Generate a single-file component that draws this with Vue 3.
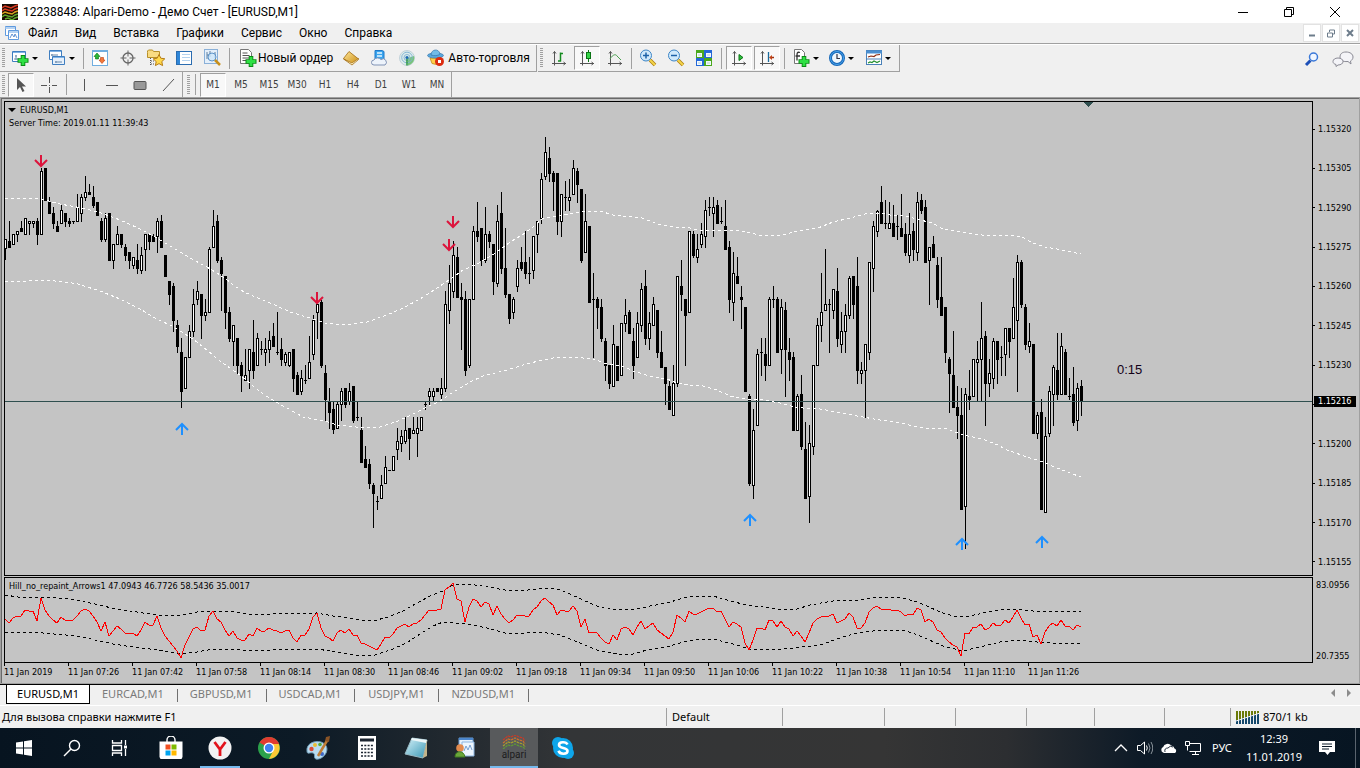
<script setup>
import { ref } from 'vue'

const menu = ['Файл', 'Вид', 'Вставка', 'Графики', 'Сервис', 'Окно', 'Справка']
const viewTools = [
  { icon: 'market', label: 'Обзор рынка' },
  { icon: 'target', label: 'Окно данных' },
  { icon: 'navigator', label: 'Навигатор', big: true },
  { icon: 'terminal', label: 'Терминал' },
  { icon: 'tester', label: 'Тестер стратегий', big: true }
]
const serviceTools = [
  { icon: 'book', label: 'MetaEditor' },
  { icon: 'cloud', label: 'Хостинг' },
  { icon: 'signal', label: 'Сигналы' }
]
const chartTypes = [
  { icon: 'bars', label: 'Бары' },
  { icon: 'candles', label: 'Свечи', on: true },
  { icon: 'curve', label: 'Линия' }
]
const zoomTools = [
  { icon: 'zoomin', label: 'Увеличить', big: true },
  { icon: 'zoomout', label: 'Уменьшить', big: true },
  { icon: 'tiles', label: 'Окна мозаикой' }
]
const scrollTools = [
  { icon: 'autoscroll', label: 'Автопрокрутка', on: true },
  { icon: 'shift', label: 'Сдвиг графика', on: true }
]
const addTools = [
  { icon: 'indicator', label: 'Индикаторы', big: true },
  { icon: 'clock', label: 'Периоды' },
  { icon: 'template', label: 'Шаблоны' }
]
const drawTools = [
  { icon: 'vline', label: 'Вертикальная линия' },
  { icon: 'hline', label: 'Горизонтальная линия' },
  { icon: 'rect', label: 'Прямоугольник' },
  { icon: 'trend', label: 'Трендовая линия' }
]
const frames = ['M1', 'M5', 'M15', 'M30', 'H1', 'H4', 'D1', 'W1', 'MN']
const frame = ref('M1')
const tabs = ['EURUSD,M1', 'EURCAD,M1', 'GBPUSD,M1', 'USDCAD,M1', 'USDJPY,M1', 'NZDUSD,M1']
const tab = ref('EURUSD,M1')
// The level behind the bid marker keeps its tick only
const prices = ['1.15320', '1.15305', '1.15290', '1.15275', '1.15260', '1.15245', '1.15230', '', '1.15200', '1.15185', '1.15170', '1.15155']
const times = ['2019', '07:26', '07:42', '07:58', '08:14', '08:30', '08:46', '09:02', '09:18', '09:34', '09:50', '10:06', '10:22', '10:38', '10:54', '11:10', '11:26']
const apps = [
  { icon: 'store', label: 'Магазин' },
  { icon: 'yandex', label: 'Яндекс', run: true },
  { icon: 'chrome', label: 'Chrome' },
  { icon: 'paint', label: 'Paint' },
  { icon: 'calc', label: 'Калькулятор' },
  { icon: 'note', label: 'Блокнот' },
  { icon: 'people', label: 'Контакты' },
  { icon: 'alpari', label: 'Alpari', run: true, on: true },
  { icon: 'skype', label: 'Skype' }
]

// Each bar: direction, high, body top, body bottom, low
const series = `u 239 239 249 260,d 221 241 248 248,u 234 234 245 245,u 231 231 235 242,d 221 228 232 232,u 218 218 235 235,u 221 221 224 235,u 221 221 224 228,d 218 221 235 245,u 168 171 235 235
d 168 168 201 201,d 197 202 214 214,d 207 213 224 229,d 221 226 232 232,u 205 210 224 224,d 213 213 222 227,d 218 221 224 227,d 221 221 222 224,u 194 207 222 222,u 194 197 214 222
u 176 192 198 201,d 184 192 195 195,d 186 197 206 208,d 202 202 216 216,d 218 221 240 242,u 213 218 240 242,d 213 213 261 261,u 244 244 261 269,u 226 234 245 245,d 234 234 245 248
d 244 247 256 261,d 252 252 261 269,u 257 257 266 269,d 244 260 269 274,u 247 255 271 274,u 234 234 250 271,d 234 234 242 250,d 234 236 242 242,u 218 221 237 253,d 215 221 248 248
d 255 255 277 277,d 281 281 295 305,d 283 286 321 332,d 320 325 347 353,d 338 352 392 408,u 357 357 389 389,u 325 331 358 358,u 289 304 332 337,u 281 291 300 305,d 294 294 316 339
u 299 312 316 321,u 247 249 313 313,u 210 226 248 248,d 215 221 261 263,d 257 260 274 311,d 276 276 313 329,d 307 312 339 342,u 325 325 342 366,d 338 338 366 374,d 362 365 376 392
u 349 375 381 381,u 349 349 371 389,d 320 352 371 379,u 333 338 366 366,d 341 349 350 355,u 338 349 353 366,u 331 340 350 363,d 323 336 347 347,d 312 352 353 355,d 338 349 360 366
u 352 354 363 366,u 352 352 366 367,d 349 349 379 392,d 372 375 395 395,u 370 378 392 395,d 365 380 381 384,u 336 362 379 379,u 315 320 355 360,u 304 304 313 339,d 300 302 366 368
d 365 373 400 421,d 388 401 413 429,d 401 409 430 434,u 401 404 429 429,u 388 391 405 421,d 388 388 405 408,u 383 391 402 405,d 386 386 421 423,d 401 417 418 421,d 417 430 463 463
d 446 459 468 468,d 459 464 484 489,d 483 485 494 528,d 496 501 502 510,u 475 485 499 499,u 456 467 484 484,d 470 470 471 471,u 456 456 471 471,u 428 441 450 460,u 430 436 444 452
u 417 430 442 444,d 428 428 439 460,u 417 430 434 434,u 417 428 434 457,u 417 417 431 431,d 401 404 405 410,u 388 391 397 405,u 388 391 397 401,d 388 388 392 392,u 378 388 395 402
u 291 304 389 392,u 265 283 311 324,u 241 255 292 298,d 247 257 298 298,d 283 297 300 350,d 291 299 371 376,u 299 299 366 368,u 226 231 300 300,d 202 231 237 242,d 228 228 261 266
u 207 234 261 263,d 231 234 242 248,d 244 244 282 295,u 205 221 284 287,d 192 213 269 274,d 228 268 295 298,d 294 294 319 324,u 297 299 313 319,u 260 268 287 292,d 247 262 269 271
d 231 262 274 279,d 257 273 274 284,u 236 236 271 279,u 221 221 235 253,u 173 179 219 224,u 137 152 177 180,d 147 158 174 182,d 171 173 182 211,d 173 173 222 235,u 194 194 222 237
d 181 197 198 211,u 179 197 201 211,u 160 168 195 195,d 168 171 185 203,d 189 189 261 263,u 194 221 253 253,d 226 226 303 303,d 273 299 300 358,d 297 299 308 329,d 299 307 339 342
d 338 341 366 381,d 365 365 384 389,u 325 344 387 387,d 346 346 381 381,u 323 323 376 376,u 299 315 324 332,d 310 312 334 334,d 328 341 366 379,u 312 323 358 358,u 283 289 326 332
d 270 286 339 345,u 312 323 339 350,u 297 304 326 326,d 310 310 353 358,d 331 352 368 368,d 367 367 384 405,d 380 386 410 410,u 365 383 416 416,u 276 276 384 387,d 260 286 295 311
d 299 299 316 366,u 231 231 313 313,d 231 234 256 258,u 234 249 258 263,u 223 234 245 248,u 200 210 237 248,d 197 207 208 216,u 197 207 214 237,d 200 205 224 224,d 207 221 222 224
d 200 226 250 250,d 241 247 300 313,u 252 273 303 321,d 257 276 284 284,d 286 297 300 329,d 307 307 392 392,d 394 396 484 486,u 409 430 486 499,u 349 354 426 426,d 338 352 353 376
d 338 354 366 381,u 297 299 366 366,d 286 299 300 308,d 297 299 353 353,u 299 307 350 374,d 302 310 350 397,d 338 352 360 381,d 352 357 431 431,u 394 396 431 431,d 375 394 447 450
d 422 449 499 499,u 425 443 497 523,u 365 365 447 455,u 318 325 366 366,u 273 312 326 342,u 249 304 311 311,d 299 304 305 353,u 289 289 311 319,d 268 291 339 347,u 312 331 345 353
u 304 315 332 353,u 276 278 316 319,d 276 276 305 319,d 257 286 371 384,u 362 370 374 384,u 344 344 371 418,u 262 262 353 360,u 221 226 269 292,u 210 211 232 237,d 186 202 224 224
d 200 223 224 229,u 202 223 229 229,d 205 223 237 237,d 215 226 227 240,d 194 228 237 237,d 223 234 253 256,u 213 234 256 263,d 223 231 250 261,u 192 202 253 261,d 194 200 211 214
d 200 207 263 263,u 247 247 261 305,d 236 244 258 258,d 257 265 300 308,d 257 297 316 316,d 307 307 353 363,d 357 359 374 413,d 331 375 408 408,d 386 407 416 439,d 388 415 510 510
u 388 394 507 549,d 370 396 400 410,u 359 359 397 397,u 341 359 363 402,u 302 338 360 402,d 331 336 384 426,u 359 373 384 397,u 338 341 379 389,d 341 341 360 384,d 346 357 358 376
u 328 328 355 376,d 328 328 342 358,u 278 307 339 339,u 255 262 321 392,d 260 262 305 308,d 304 307 345 350,u 323 341 347 353,d 344 344 434 434,u 412 415 434 439,d 399 412 510 510
u 417 436 513 513,u 386 391 434 437,u 365 367 395 426,d 333 370 395 400,u 333 346 395 395,d 349 352 395 395,d 378 396 397 400,d 367 394 423 426,u 383 388 421 431,d 380 386 402 416`
const bars = series.split(/[,\n]/).map((row, i) => {
  const [dir, hi, top, bottom, lo] = row.trim().split(' ')
  return { x: 5 + i * 4, up: dir === 'u', hi: +hi, top: +top, bottom: +bottom, lo: +lo }
})

const upperBand = '5,198 33,198 45,200 60,204 82,208 98,212 115,218 127,223 142,230 155,237 165,243 180,252 192,259 205,266 217,273 226,279 233,285 244,292 258,298 277,306 290,312 313,319 325,323 342,325 353,324 367,322 387,315 403,308 420,299 437,288 452,278 463,270 477,264 487,258 497,252 510,242 522,235 533,227 542,219 558,216 573,213 585,211 600,211 613,215 642,218 658,224 673,227 690,228 703,231 730,230 747,232 763,236 783,235 797,231 810,229 818,228 833,222 850,218 865,214 880,213 890,215 900,215 917,219 932,223 943,229 962,232 982,235 998,236 1007,235 1022,237 1033,243 1045,247 1057,249 1067,251 1081,254'
const lowerBand = '5,282 28,281 45,280 65,282 78,284 100,291 120,299 140,309 157,319 172,326 182,332 197,342 208,351 220,361 240,375 252,385 263,394 276,402 287,408 303,417 325,421 337,425 365,428 380,427 398,421 413,414 427,407 440,401 450,394 470,382 483,376 507,370 530,363 553,358 573,357 593,359 607,364 622,366 633,371 653,377 667,379 677,383 690,385 703,386 717,390 730,396 747,399 763,400 780,403 795,407 803,408 820,409 837,412 857,416 880,420 900,423 923,428 947,429 963,435 982,439 998,445 1007,450 1027,457 1043,462 1057,468 1070,473 1081,477'
const hillUpper = '5,595 18,597 45,597 70,599 85,602 100,605 115,609 130,611 150,614 167,616 183,615 197,612 213,611 237,612 247,614 273,614 317,613 333,616 350,618 360,620 373,621 388,617 403,611 417,603 430,596 443,591 453,585 457,584 475,585 488,587 505,590 528,590 547,588 560,590 570,594 583,600 597,606 613,609 637,609 650,606 667,603 680,599 693,596 713,596 730,601 747,605 763,607 783,610 797,609 810,605 833,601 860,600 880,597 903,598 917,602 927,606 940,612 953,616 970,616 983,613 1000,610 1017,609 1033,611 1063,611 1073,612 1081,611'
const hillLower = '5,632 43,633 77,636 100,641 113,644 133,647 158,650 180,654 197,652 213,649 243,650 263,651 280,649 317,649 330,651 353,655 375,655 393,649 408,642 420,634 433,626 443,622 455,623 467,624 487,628 505,633 527,633 540,632 560,635 580,643 597,650 617,654 633,654 647,650 667,647 683,642 700,639 717,640 733,644 750,649 773,650 793,648 820,645 837,639 853,634 873,631 890,630 905,631 913,633 927,639 943,646 963,651 980,647 1000,642 1017,640 1037,642 1053,643 1081,643'
const hillValues = [
  619, 623, 618, 616, 616, 610, 611, 611, 621, 598, 610, 616, 620, 623, 617, 620, 621, 620, 616, 611, 609, 611, 616, 622, 631, 622, 636, 631, 626, 629,
  633, 634, 633, 636, 630, 622, 625, 625, 616, 628, 636, 641, 646, 651, 658, 645, 637, 629, 627, 631, 630, 616, 611, 619, 622, 630, 636, 631, 638, 640,
  640, 634, 636, 628, 631, 631, 628, 630, 631, 633, 631, 630, 638, 642, 635, 635, 629, 617, 613, 628, 636, 638, 641, 633, 630, 633, 629, 635, 635, 643,
  644, 646, 648, 650, 644, 637, 638, 634, 628, 626, 624, 627, 624, 623, 620, 615, 610, 610, 610, 609, 590, 587, 583, 599, 601, 622, 607, 599, 601, 607,
  602, 604, 615, 606, 614, 619, 623, 620, 615, 615, 616, 616, 610, 607, 601, 598, 602, 605, 615, 610, 611, 611, 606, 611, 627, 619, 633, 632, 633, 638,
  642, 644, 635, 640, 629, 627, 629, 635, 627, 621, 629, 626, 623, 630, 633, 636, 639, 632, 615, 618, 622, 611, 614, 614, 612, 610, 608, 608, 612, 611,
  619, 627, 622, 624, 627, 643, 650, 640, 628, 628, 630, 620, 621, 627, 621, 627, 629, 636, 631, 636, 642, 633, 623, 619, 617, 616, 616, 614, 623, 621,
  619, 613, 617, 628, 628, 623, 612, 608, 606, 609, 609, 609, 611, 610, 612, 616, 614, 615, 608, 610, 622, 619, 622, 630, 632, 638, 642, 645, 647, 656,
  633, 634, 627, 627, 624, 630, 628, 623, 626, 625, 620, 623, 617, 610, 618, 625, 624, 637, 635, 644, 632, 626, 623, 626, 620, 626, 626, 630, 625, 627
]
const hill = hillValues.map((y, i) => `${5 + i * 4},${y}`).join(' ')
const sells = [[41, 161], [317, 298], [453, 222], [449, 245]]
const buys = [[182, 429], [750, 520], [962, 544], [1042, 542]]
</script>

<template>
  <div class="desktop">
    <svg class="defs" aria-hidden="true">
      <defs>
        <linearGradient id="gGold" x1="0" y1="0" x2="1" y2="1"><stop offset="0" stop-color="#ffe79a" /><stop offset="1" stop-color="#c88a10" /></linearGradient>
        <linearGradient id="gNote" x1="0" y1="0" x2="1" y2="1"><stop offset="0" stop-color="#d7f3fa" /><stop offset="1" stop-color="#3796b4" /></linearGradient>
      </defs>
      <symbol id="i-logo" viewBox="0 0 16 16"><rect width="16" height="16" fill="#180a04" /><g fill="none" stroke-width="1.5"><path d="M0 4 3 2 6 3 9 4 13 2 16 1M0 7 3 5 6 6 10 7 13 5 16 4" stroke="#d83a22" /><path d="M0 10 3 8 6 9 10 10 13 8 16 7" stroke="#d9a320" /><path d="M0 13 3 11 6 12 10 13 13 11 16 10M3 15 6 14 10 16 13 14 16 13" stroke="#5da82c" /></g></symbol>
      <symbol id="i-mdi" viewBox="0 0 16 16"><g fill="#fff" stroke="#5f9ade"><path d="M1.500 1.500h10v9h-10z" /><path d="M1 3h10" stroke-width="1.500" stroke="#9cc3ee" /><path d="M4.500 5.500h10v9h-10z" /><path d="M5 7h9" stroke-width="1.500" stroke="#9cc3ee" /><path d="m6 13 2-4 2 3 1-3 2 4" fill="none" stroke="#3c78c8" stroke-width=".8" /></g></symbol>
      <symbol id="i-newchart" viewBox="0 0 18 18"><path d="M1.500 2.500h13v10h-13z" fill="#fff" stroke="#3f7ec0" /><path d="M2 3.500h12" stroke="#7fb2e6" /><path d="M3 10h5M5 6v5M4 7h2" stroke="#7090b0" /><path d="M12 6v11M6.500 11.500h11" stroke="#0a8a14" stroke-width="4.600" /><path d="M12 7v9M7.500 11.500h9" stroke="#2ee044" stroke-width="2.800" /></symbol>
      <symbol id="i-profiles" viewBox="0 0 18 18"><g fill="#fff" stroke="#3f7ec0"><path d="M1.500 1.500h12v9h-12z" /><path d="M2 2.500h11" stroke="#7fb2e6" /><path d="M4.500 7.500h12v8h-12z" fill="#e6f0fb" /><path d="M5 8.500h11" stroke="#7fb2e6" /></g><path d="M3 6h7M4 5v2M7 13h7M8 12v2" stroke="#6687aa" /></symbol>
      <symbol id="i-market" viewBox="0 0 16 16"><rect x=".5" y=".5" width="15" height="15" fill="#fff" stroke="#70aee0" /><path d="M1 1.500h14" stroke="#70aee0" /><path d="m5 3 3 3.500H6.500v2.500h-3V6.500H2z" fill="#28b838" stroke="#087014" stroke-width=".6" /><path d="M8.500 7.500h3V10H13L10 13.500 7 10h1.500z" fill="#f47a3a" stroke="#b83c14" stroke-width=".6" /></symbol>
      <symbol id="i-target" viewBox="0 0 16 16"><g fill="none" stroke="#666"><circle cx="8" cy="8" r="5" stroke-width="1.300" /><path d="M8 .5v6M8 9.500v6M.5 8h6M9.500 8h6" /></g></symbol>
      <symbol id="i-navigator" viewBox="0 0 18 18"><path d="M.5 3.500V2l1-1h4l1 1.500h6v6H.5z" fill="#f9db82" stroke="#b8902a" /><path d="M3.500 9v7M4 12h4M4 15h4" stroke="#555" stroke-dasharray="1 1" /><path d="m12 5.500 1.800 3.700 4 .6-3 2.800.8 4-3.600-2-3.600 2 .8-4-3-2.800 4-.6z" fill="#ffd84a" stroke="#b57b12" /></symbol>
      <symbol id="i-terminal" viewBox="0 0 16 16"><rect x=".5" y="1.500" width="15" height="13" fill="#fff" stroke="#2a6cb0" /><rect x="1" y="2" width="3" height="12" fill="#2f86d8" /><path d="M6 4.500h8M6 7.500h8M6 10.500h8" stroke="#b4d2ee" /></symbol>
      <symbol id="i-tester" viewBox="0 0 18 18"><rect x="1.500" y=".5" width="13" height="14" fill="#e4effa" stroke="#8ab0d8" /><path d="M4 3v7M7 2v6M12 3v6M4 6h3" stroke="#6080a0" /><circle cx="9" cy="8" r="4" fill="#cde6fa" fill-opacity=".8" stroke="#5c93c8" /><path d="m12 11 5 5" stroke="#c8901c" stroke-width="2.500" /></symbol>
      <symbol id="i-order" viewBox="0 0 18 18"><path d="M1.500.5h8l3 3v11h-11z" fill="#fff" stroke="#777" /><path d="M3.500 4h5M3.500 6.500h7M3.500 9h7M3.500 11.500h4" stroke="#555" /><path d="M12 7v11M6.500 12.500h11" stroke="#0a8a14" stroke-width="4.600" /><path d="M12 8v9M7.500 12.500h9" stroke="#2ee044" stroke-width="2.800" /></symbol>
      <symbol id="i-book" viewBox="0 0 16 16"><path d="M6 1.500 15.500 9 9 14.500.5 8.500z" fill="url(#gGold)" stroke="#a06a10" stroke-width=".8" /><path d="m.5 9 8.500 6 6.500-5.500v-1L9 13z" fill="#fff3c8" stroke="#a06a10" stroke-width=".7" /></symbol>
      <symbol id="i-cloud" viewBox="0 0 16 16"><path d="M4 .5h7l2 1v8H4z" fill="#3aa4ee" stroke="#1d78c8" /><path d="M6 3h5M6 6h5" stroke="#e6f6ff" stroke-width="1.500" /><path d="M3 15a2.500 2.500 0 0 1 0-5 4 3.500 0 0 1 7-.5 3 3 0 0 1 4 5.500z" fill="#edf3fb" stroke="#8093b5" /></symbol>
      <symbol id="i-signal" viewBox="0 0 16 16"><circle cx="8" cy="8" r="7.500" fill="#dcecea" stroke="#a9c0cc" stroke-width=".6" /><path d="M9 15.400a7.500 7.500 0 0 0 6-9.400L9 8z" fill="#79c47c" /><g fill="none" stroke="#7fb0d4" stroke-width=".9"><circle cx="8" cy="7.500" r="5.300" /><circle cx="8" cy="7.500" r="3" /></g><circle cx="8" cy="7.500" r="1.600" fill="#1c6ab0" /><path d="M8 9v6.500" stroke="#2b963f" stroke-width="1.500" /></symbol>
      <symbol id="i-auto" viewBox="0 0 18 18"><path d="M3 9h11l-1 5.500a6 3 0 0 1-8 0z" fill="#ffcf4a" stroke="#b88210" stroke-width=".7" /><ellipse cx="8.500" cy="6.500" rx="8" ry="2.600" fill="#5aa8dc" stroke="#2a6ca4" stroke-width=".6" /><path d="M4 6c0-6 8-7 9-1-2 2-6 2-9 1" fill="#72bce8" stroke="#2a6ca4" stroke-width=".6" /><circle cx="12.500" cy="12.500" r="4.500" fill="#dc2c10" /><rect x="11" y="11" width="3" height="3" fill="#fff" /></symbol>
      <symbol id="i-bars" viewBox="0 0 16 16"><path d="M3.500 1.500v14M1 13.500h14M2 3.500l1.500-2 1.500 2M12.500 12l2 1.500-2 1.500" fill="none" stroke="#555" /><path d="M9.500 2.500v9M7 11h3M9 3.500h3" stroke="#138a1e" stroke-width="1.500" /></symbol>
      <symbol id="i-candles" viewBox="0 0 16 16"><path d="M3.500 1.500v14M1 13.500h14M2 3.500l1.500-2 1.500 2M12.500 12l2 1.500-2 1.500" fill="none" stroke="#555" /><path d="M9.500 0v12" stroke="#0a7414" /><rect x="7.500" y="2.500" width="4" height="6" fill="#35d448" stroke="#0a7414" /></symbol>
      <symbol id="i-curve" viewBox="0 0 16 16"><path d="M3.500 1.500v14M1 13.500h14M2 3.500l1.500-2 1.500 2M12.500 12l2 1.500-2 1.500" fill="none" stroke="#555" /><path d="M3 9c3-5 6-5 7-3l4 4" fill="none" stroke="#4aa050" /></symbol>
      <symbol id="i-zoomin" viewBox="0 0 18 18"><path d="m11 11 5 5" stroke="#ad7f10" stroke-width="3.500" /><path d="m11 11 5 5" stroke="#f4d54a" stroke-width="2" /><circle cx="7" cy="6.500" r="5.500" fill="#cfe9fb" stroke="#3d85c6" /><path d="M4 6.500h6M7 3.500v6" stroke="#1c62a8" stroke-width="1.500" /></symbol>
      <symbol id="i-zoomout" viewBox="0 0 18 18"><path d="m11 11 5 5" stroke="#ad7f10" stroke-width="3.500" /><path d="m11 11 5 5" stroke="#f4d54a" stroke-width="2" /><circle cx="7" cy="6.500" r="5.500" fill="#cfe9fb" stroke="#3d85c6" /><path d="M4 6.500h6" stroke="#1c62a8" stroke-width="1.500" /></symbol>
      <symbol id="i-tiles" viewBox="0 0 16 16"><path d="M0 0h8v8H0zM8 8h8v8H8z" fill="#4aa81c" /><path d="M8 0h8v8H8zM0 8h8v8H0z" fill="#2468d8" /><path d="M1 3h5v4H1zM10 3h5v4h-5zM1 11h5v4H1zM10 11h5v4h-5z" fill="#f2f8ff" /><path d="M2 5h3M11 5h3M2 13h3M11 13h3" stroke="#b8d2c8" /></symbol>
      <symbol id="i-autoscroll" viewBox="0 0 16 16"><path d="M3.500 1.500v14M1 13.500h14M2 3.500l1.500-2 1.500 2M12.500 12l2 1.500-2 1.500" fill="none" stroke="#555" /><path d="M8 4.500v6L12 7.500z" fill="#30c040" stroke="#0a7414" /></symbol>
      <symbol id="i-shift" viewBox="0 0 16 16"><path d="M3.500 1.500v14M1 13.500h14M2 3.500l1.500-2 1.500 2M12.500 12l2 1.500-2 1.500" fill="none" stroke="#555" /><path d="M9.500 2v10" stroke="#1a6a9c" stroke-width="1.300" /><path d="M15 7.500h-3" stroke="#a03010" stroke-width="1.500" /><path d="m10 7.500 3-2.500v5z" fill="#c04418" /></symbol>
      <symbol id="i-indicator" viewBox="0 0 18 18"><path d="M2.500.5h7l3 3v11h-10z" fill="#fff" stroke="#777" /><path d="M8 3.500c-3-1-3 1-3 3v5M3.500 7H8" fill="none" stroke="#333" stroke-width="1.300" /><path d="M12 7v11M6.500 12.500h11" stroke="#0a8a14" stroke-width="4.600" /><path d="M12 8v9M7.500 12.500h9" stroke="#2ee044" stroke-width="2.800" /></symbol>
      <symbol id="i-clock" viewBox="0 0 16 16"><circle cx="8" cy="8" r="6.500" fill="#eef6fd" stroke="#1667b8" stroke-width="3" /><circle cx="8" cy="8" r="6.500" fill="none" stroke="#4aa4ec" /><path d="M8 4v4.500h3" fill="none" stroke="#334" stroke-width="1.200" /></symbol>
      <symbol id="i-template" viewBox="0 0 16 16"><rect x=".5" y=".5" width="15" height="14" fill="#fff" stroke="#4a80b8" /><path d="M0 2h16" stroke="#4a8fd0" stroke-width="3" /><path d="M0 9h16" stroke="#4a80b8" /><path d="m2 7 3-1 3 .5 2-1.500 4-.5" fill="none" stroke="#8a2a10" stroke-width="1.200" /><path d="m2 13 2-1 2 .5L8 11l3 1.500 3-1.500" fill="none" stroke="#259030" stroke-width="1.200" /></symbol>
      <symbol id="i-cursor" viewBox="0 0 16 16"><path d="M4 1v12l3-3 2.500 5 2-1L9 9.500h4z" fill="#555" /></symbol>
      <symbol id="i-cross" viewBox="0 0 16 16"><path d="M8.500 0v6M8.500 10v6M0 8.500h6M11 8.500h5M8 8.500h1" stroke="#555" /></symbol>
      <symbol id="i-vline" viewBox="0 0 16 16"><path d="M8.500 2v12" stroke="#555" /></symbol>
      <symbol id="i-hline" viewBox="0 0 16 16"><path d="M2 8.500h12" stroke="#555" /></symbol>
      <symbol id="i-rect" viewBox="0 0 16 16"><rect x="2" y="4.500" width="12" height="8" rx="1" fill="#999" stroke="#555" /></symbol>
      <symbol id="i-trend" viewBox="0 0 16 16"><path d="M3 14 14 2" stroke="#555" /></symbol>
      <symbol id="i-find" viewBox="0 0 16 16"><path d="m2 14 4.500-4.500" stroke="#1d50b8" stroke-width="3" /><circle cx="9.500" cy="6" r="4" fill="#f0f6ff" stroke="#3a78d8" stroke-width="1.500" /></symbol>
      <symbol id="i-chat" viewBox="0 0 22 16"><g fill="#f4f4f8" stroke="#8a8a94"><path d="M14 1c4 0 7 2 7 5 0 2-1 3-2.500 4l.5 3-3-2.500C10 11 8 9 8 6s2-5 6-5z" /><path d="M6 7c3 0 5 1.500 5 3.500S9 14 6 14l-2 1.500v-2C2 13 1 12 1 10.500 1 8.500 3 7 6 7z" /></g></symbol>
      <symbol id="i-win" viewBox="0 0 24 24"><path d="M4 6.500 11 5.500v6H4zM12 5.300 20 4v7.500h-8zM4 12.500h7v6l-7-1zM12 12.500h8V20l-8-1.200z" fill="#fff" /></symbol>
      <symbol id="i-search" viewBox="0 0 24 24"><g fill="none" stroke="#fff" stroke-width="1.400"><circle cx="14.500" cy="9.500" r="5" /><path d="m11 13-7 7" /></g></symbol>
      <symbol id="i-task" viewBox="0 0 24 24"><g fill="none" stroke="#fff"><path d="M4.500 4v3h9V4M4.500 20v-3h9v3M4.500 9.500h9v5h-9zM17.500 4v5M17.500 13v7" stroke-width="1.300" /><path d="M16 11h3" stroke-width="3" /></g></symbol>
      <symbol id="i-store" viewBox="0 0 24 24"><path d="M8 6V4a4 4 0 0 1 8 0v2" fill="none" stroke="#fff" stroke-width="1.400" /><path d="M.5 5.500h23V21l-1 2h-21l-1-2z" fill="#fff" /><path d="M6.500 8.500h5v5h-5z" fill="#f25022" /><path d="M12.500 8.500h5v5h-5z" fill="#7fba00" /><path d="M6.500 14.500h5v5h-5z" fill="#00a4ef" /><path d="M12.500 14.500h5v5h-5z" fill="#ffb900" /></symbol>
      <symbol id="i-yandex" viewBox="0 0 24 24"><circle cx="12" cy="12" r="11.500" fill="#f2f2f2" /><path d="m6.500 6 5.500 7.500L17.500 6M12 12.500V20" fill="none" stroke="#e3131b" stroke-width="2.800" /></symbol>
      <symbol id="i-chrome" viewBox="0 0 24 24"><circle cx="12" cy="12" r="11" fill="#2ba14b" /><path d="M12 12 2.500 6.500A11 11 0 0 1 21.500 6.500L22 8H12z" fill="#e13b30" /><path d="M12 23a11 11 0 0 0 9.800-15H12l4.500 6z" fill="#fcc934" /><circle cx="12" cy="12" r="5.500" fill="#fff" /><circle cx="12" cy="12" r="4.200" fill="#3e82f1" /></symbol>
      <symbol id="i-paint" viewBox="0 0 24 24"><path d="M1 15C0 8 8 4 15 6c6 2 7 7 5 11s-7 7-10 6 0-5-3-6-6 2-6-2z" fill="#b7dbf0" stroke="#6f9cb8" /><circle cx="5.500" cy="13" r="2.200" fill="#d84a38" /><circle cx="9" cy="9" r="2" fill="#e8bc34" /><circle cx="14" cy="8.500" r="1.800" fill="#57a83c" /><circle cx="16" cy="18" r="2" fill="#3f67c4" /><path d="M22 3 12 20" stroke="#c07c34" stroke-width="2.500" /><path d="m19 5 1-4 4-1-1 6z" fill="#8a5426" /></symbol>
      <symbol id="i-calc" viewBox="0 0 24 24"><path d="M3 0h18v24H3z" fill="#fff" /><path d="M5 2.500h14v3H5z" fill="#1b2430" /><path d="M6 9.500h12M6 13h12M6 16.500h12M6 20h12" stroke="#1b2430" stroke-width="1.600" stroke-dasharray="2 1.300" /></symbol>
      <symbol id="i-note" viewBox="0 0 24 24"><path d="m8 2 15 2-4 18L1 18z" fill="url(#gNote)" stroke="#97b8c2" /><path d="m8 2 15 2-1 3L7 4z" fill="#ecf6f8" /><path d="m23 4 0 16-4 2z" fill="#c2b38a" /></symbol>
      <symbol id="i-people" viewBox="0 0 24 24"><path d="M6 2h14v14H6z" fill="#e4f0fb" stroke="#6a9ed6" /><path d="M6 3h14" stroke="#4b86cc" stroke-width="2" /><path d="M9 6h12v14H9z" fill="#edf5fd" stroke="#8bb4e0" /><path d="m11 15 2-5 2 4 2-5 2 5" fill="none" stroke="#77a0d0" /><circle cx="7" cy="12" r="3.800" fill="#e2894c" /><path d="M2 21c0-7 9-7 10 0z" fill="#6aa63a" stroke="#3f7a20" /></symbol>
      <symbol id="i-alpari" viewBox="0 0 24 14"><g fill="none" stroke-width="1.200" stroke-dasharray="2.500 .7"><path d="M1 5 6 1l3 1 4-2 4 2 4 1 2 3" stroke="#cc3a24" /><path d="m1 8 5-4 3 1 4-2 4 2 4 1 2 3" stroke="#d0702a" /><path d="m1 11 5-4 3 1 4-2 4 2 4 1 2 3" stroke="#a8a02c" /><path d="m1 14 5-4 3 1 4-2 4 2 4 1 2 2" stroke="#5f9a34" /></g></symbol>
      <symbol id="i-skype" viewBox="0 0 24 24"><circle cx="12" cy="12" r="10" fill="#0ea5e9" /><circle cx="7" cy="7" r="6" fill="#0ea5e9" /><circle cx="17" cy="17" r="6" fill="#0ea5e9" /><path d="M16.500 8.500C15 5.500 8 5.500 8 9c0 4 8.500 2 8.500 6 0 3.500-7.500 4-9-.2" fill="none" stroke="#fff" stroke-width="2.600" /></symbol>
    </svg>

    <header class="titlebar">
      <svg class="ico16"><use href="#i-logo" /></svg>
      <h1 class="caption">12238848: Alpari-Demo - Демо Счет - [EURUSD,M1]</h1>
      <div class="winbtns">
        <button aria-label="Свернуть"><svg viewBox="0 0 12 12"><path d="M1 6.500h10" /></svg></button>
        <button aria-label="Восстановить"><svg viewBox="0 0 12 12"><path d="M1.500 3.500h7v7h-7zM3.500 3.500v-2h7v7h-2" /></svg></button>
        <button aria-label="Закрыть"><svg viewBox="0 0 12 12"><path d="m1 1 10 10M11 1 1 11" /></svg></button>
      </div>
    </header>

    <nav class="menubar">
      <svg class="ico16"><use href="#i-mdi" /></svg>
      <button v-for="m in menu" :key="m" class="menuitem">{{ m }}</button>
      <div class="mdibtns">
        <button aria-label="Свернуть окно"><svg viewBox="0 0 10 10"><path d="M2 7.500h6" stroke-width="2" /></svg></button>
        <button aria-label="Восстановить окно"><svg viewBox="0 0 10 10"><path d="M1.500 5h5v4h-5zM3.500 4V2h5v4H7" /></svg></button>
        <button aria-label="Закрыть окно"><svg viewBox="0 0 10 10"><path d="m2 2 6 6M8 2 2 8" stroke-width="2" /></svg></button>
      </div>
    </nav>

    <div class="toolrow">
      <div class="toolbar framed">
        <i class="grip"></i>
        <button v-for="n in ['newchart', 'profiles']" :key="n" class="tool split" :aria-label="n"><svg class="ico18"><use :href="'#i-' + n" /></svg><i class="caret"></i></button>
        <i class="sep narrow"></i>
        <button v-for="t in viewTools" :key="t.icon" class="tool" :aria-label="t.label"><svg :class="t.big ? 'ico18' : 'ico16'"><use :href="'#i-' + t.icon" /></svg></button>
        <i class="sep"></i>
        <button class="tool wide order"><svg class="ico18"><use href="#i-order" /></svg>Новый ордер</button>
        <button v-for="t in serviceTools" :key="t.icon" class="tool" :aria-label="t.label"><svg class="ico16"><use :href="'#i-' + t.icon" /></svg></button>
        <button class="tool wide auto"><svg class="ico18"><use href="#i-auto" /></svg>Авто-торговля</button>
      </div>
      <div class="toolbar framed">
        <i class="grip"></i>
        <button v-for="t in chartTypes" :key="t.icon" class="tool" :class="{ on: t.on }" :aria-label="t.label"><svg class="ico16"><use :href="'#i-' + t.icon" /></svg></button>
        <i class="sep narrow"></i>
        <button v-for="t in zoomTools" :key="t.icon" class="tool" :aria-label="t.label"><svg :class="t.big ? 'ico18' : 'ico16'"><use :href="'#i-' + t.icon" /></svg></button>
        <i class="sep"></i>
        <button v-for="t in scrollTools" :key="t.icon" class="tool" :class="{ on: t.on }" :aria-label="t.label"><svg class="ico16"><use :href="'#i-' + t.icon" /></svg></button>
        <i class="sep"></i>
        <button v-for="t in addTools" :key="t.icon" class="tool split" :aria-label="t.label"><svg :class="t.big ? 'ico18' : 'ico16'"><use :href="'#i-' + t.icon" /></svg><i class="caret"></i></button>
      </div>
      <div class="extras">
        <button class="tool" aria-label="Поиск"><svg class="ico16"><use href="#i-find" /></svg></button>
        <button class="tool" aria-label="Сообщения"><svg class="chat"><use href="#i-chat" /></svg></button>
      </div>
    </div>

    <div class="toolrow second">
      <div class="toolbar lines">
        <i class="grip"></i>
        <button class="tool on" aria-label="Курсор"><svg class="ico16"><use href="#i-cursor" /></svg></button>
        <button class="tool" aria-label="Перекрестие"><svg class="ico16"><use href="#i-cross" /></svg></button>
        <i class="sep"></i>
        <button v-for="t in drawTools" :key="t.icon" class="tool" :aria-label="t.label"><svg class="ico16"><use :href="'#i-' + t.icon" /></svg></button>
      </div>
      <div class="toolbar frames">
        <i class="grip"></i>
        <i class="sep"></i>
        <button v-for="f in frames" :key="f" class="tool tf" :class="{ on: f === frame }" @click="frame = f">{{ f }}</button>
      </div>
    </div>

    <main class="chart">
      <section class="pane price">
        <div class="plot">
          <svg class="canvas" role="img" aria-label="EURUSD M1">
            <g transform="translate(-5 -102)" shape-rendering="crispEdges">
              <g v-for="b in bars" :key="b.x">
                <rect :x="b.x" :y="b.hi" width="1" :height="b.lo - b.hi" />
                <rect :x="b.x - 1" :y="b.top" width="3" :height="b.bottom - b.top" />
                <rect v-if="b.up" :x="b.x" :y="b.top + 1" width="1" :height="b.bottom - b.top - 2" fill="#fff" />
              </g>
              <rect x="5" y="401" width="100%" height="1" fill="#2f4f4f" />
              <polyline :points="upperBand" class="band" />
              <polyline :points="lowerBand" class="band" />
              <path d="M1084 102h9l-4.500 5z" fill="#2f4f4f" />
            </g>
            <g transform="translate(-5 -102)">
              <path v-for="[x, y] in sells" :key="y" class="sell" :d="`M${x} ${y - 6}v11M${x - 6} ${y - 1}l6 6 6-6`" />
              <path v-for="[x, y] in buys" :key="x" class="buy" :d="`M${x} ${y + 6}v-11M${x - 6} ${y + 1}l6-6 6 6`" />
              <text x="1117" y="374" class="timer">0:15</text>
            </g>
          </svg>
          <div class="plottext">
            <p><i class="caret"></i>EURUSD,M1</p>
            <p>Server Time: 2019.01.11 11:39:43</p>
          </div>
        </div>
        <div class="axis">
          <span v-for="p in prices" :key="p">{{ p }}</span>
          <output class="bid">1.15216</output>
        </div>
      </section>
      <section class="pane hill">
        <div class="plot">
          <svg class="canvas" role="img" aria-label="Hill_no_repaint_Arrows1">
            <g transform="translate(-5 -578)" fill="none" shape-rendering="crispEdges">
              <polyline :points="hillUpper" class="band dark" />
              <polyline :points="hillLower" class="band dark" />
              <polyline :points="hill" stroke="#f00" />
            </g>
          </svg>
          <div class="plottext"><p>Hill_no_repaint_Arrows1 47.0943 46.7726 58.5436 35.0017</p></div>
        </div>
        <div class="axis ends"><span>83.0956</span><span>20.7355</span></div>
      </section>
      <div class="times"><span v-for="t in times" :key="t">11 Jan {{ t }}</span></div>
    </main>

    <div class="tabs">
      <div class="tablist" role="tablist">
        <button v-for="t in tabs" :key="t" role="tab" :aria-selected="t === tab" :class="{ sel: t === tab }" @click="tab = t">{{ t }}</button>
      </div>
      <div class="scroller">
        <button aria-label="Влево"><i class="arrow left"></i></button>
        <button aria-label="Вправо"><i class="arrow"></i></button>
      </div>
    </div>

    <footer class="status">
      <span class="help">Для вызова справки нажмите F1</span>
      <span class="cell profile">Default</span>
      <span class="cell c102"></span>
      <span class="cell c71"></span>
      <span class="cell c71"></span>
      <span class="cell c68"></span>
      <span class="cell c70"></span>
      <span class="cell c66"></span>
      <span class="cell net">
        <svg viewBox="0 0 24 13" class="traffic"><path d="M1 0v13M4 0v13M7 0v13M10 0v13M13 0v13M16 0v13M19 0v13M22 0v13" stroke="#14486c" stroke-width="2" /><path d="M1 0v9M4 0v8M7 0v7M10 0v6M13 0v5M16 0v4M19 0v4M22 0v3" stroke="#6a7a08" stroke-width="2" /><path d="m0 10 24-8" stroke="#f0f0f0" /></svg>
        870/1 kb
      </span>
    </footer>

    <div class="taskbar">
      <button class="sys" aria-label="Пуск"><svg class="ico24"><use href="#i-win" /></svg></button>
      <button class="sys" aria-label="Поиск Windows"><svg class="ico24"><use href="#i-search" /></svg></button>
      <button class="sys" aria-label="Представление задач"><svg class="ico24"><use href="#i-task" /></svg></button>
      <div class="apps">
        <button v-for="a in apps" :key="a.icon" class="app" :class="{ on: a.on, run: a.run }" :aria-label="a.label">
          <svg :class="a.icon === 'alpari' ? 'alp' : 'ico24'"><use :href="'#i-' + a.icon" /></svg>
          <span v-if="a.icon === 'alpari'">alpari</span>
        </button>
      </div>
      <div class="tray">
        <button aria-label="Скрытые значки"><svg viewBox="0 0 16 16" class="ico16"><path d="m2 11 6-6 6 6" fill="none" stroke="#fff" stroke-width="1.300" /></svg></button>
        <button aria-label="Громкость"><svg viewBox="0 0 16 16" class="ico16"><path d="M.5 5.500h3l4-3.500v12l-4-3.500h-3z" fill="none" stroke="#fff" /><path d="M9.500 5.500q1.500 2.500 0 5" fill="none" stroke="#fff" /><path d="M11.500 3.500q3 4.500 0 9M14 2q3.500 6 0 12" fill="none" stroke="#8a939b" /></svg></button>
        <button aria-label="OneDrive"><svg viewBox="0 0 16 16" class="ico16"><path d="M2 12.500a3 3 0 0 1 .2-5.500 4.500 4 0 0 1 8-1.500 4 4 0 0 1 3.300 3 2.500 2.500 0 0 1 .5 4.500H5q-2.500 0-3-.5" fill="#fff" /><path d="M4 12q-1-4 3-4 2-3 5-1" fill="none" stroke="#0b1a29" stroke-width=".9" /></svg></button>
        <button aria-label="Сеть"><svg viewBox="0 0 16 16" class="ico16"><path d="M4.500 3.500h11v8h-11M10.500 11.500v3M7 14.500h7M.5 1.500h4v4h-4zM2.500 5.500v5" fill="none" stroke="#fff" /></svg></button>
        <button class="lang">РУС</button>
        <button class="when"><time>12:39</time><time>11.01.2019</time></button>
        <button class="notify" aria-label="Уведомления"><svg viewBox="0 0 16 16" class="ico16"><path d="M0 1h16v11h-5l-2.500 3L6 12H0z" fill="#fff" /><path d="M3 4h10M3 6.500h10M3 9h7" stroke="#0b1a29" /></svg></button>
        <i class="peek"></i>
      </div>
    </div>
  </div>
</template>

<style>
html, body { margin: 0; }
</style>

<style scoped>
.desktop { display: flex; flex-direction: column; min-height: 100vh; background: #f0f0f0; color: #000; font-family: Roboto, "Noto Sans", sans-serif; font-size: 12px; line-height: 16px; }
.desktop, .desktop * { box-sizing: border-box; }
.defs { position: absolute; width: 0; height: 0; }
button { margin: 0; padding: 0; border: 0; background: none; color: inherit; font: inherit; display: flex; align-items: center; justify-content: center; }
i { display: block; flex: none; }
svg { display: block; flex: none; }
.ico16 { width: 16px; height: 16px; }
.ico18 { width: 18px; height: 18px; }
.ico24 { width: 24px; height: 24px; }

.titlebar { display: flex; align-items: center; height: 23px; padding-left: 2px; background: #fff; }
.caption { margin: 0 0 0 5px; font-size: 12px; font-weight: 400; white-space: nowrap; }
.winbtns { display: flex; margin-left: auto; }
.winbtns button { width: 46px; height: 20px; }
.winbtns button:last-child { margin-right: 2px; }
.winbtns svg { width: 12px; height: 12px; fill: none; stroke: #000; }
.menubar { display: flex; align-items: center; height: 21px; padding-left: 4px; border-bottom: 1px solid #a0a0a0; }
.menuitem { margin-left: 8px; margin-right: 9px; }
.mdibtns { display: flex; gap: 1px; margin-left: auto; padding-right: 1px; }
.mdibtns button { width: 18px; height: 18px; background: #fff; border: 1px solid #e2e2e2; }
.mdibtns svg { width: 10px; height: 10px; fill: none; stroke: #6d7c8b; }

.toolrow { display: flex; height: 28px; border-top: 1px solid #fff; }
.toolrow.second { height: 25px; border-top: 0; }
.toolbar { display: flex; align-items: center; border-right: 1px solid #a0a0a0; margin-right: 1px; }
.framed { border-bottom: 1px solid #a0a0a0; }
.frames { padding-left: 1px; }
.grip { width: 3px; height: 20px; margin: 0 2px; background: repeating-linear-gradient(#a0a0a0 0 1px, #f0f0f0 1px 2px); }
.sep { width: 1px; height: 21px; margin: 0 3px; background: #a0a0a0; }
.sep.narrow { margin: 0 2px; }
.tool { width: 28px; height: 24px; }
.split { width: 37px; gap: 3px; padding-left: 4px; justify-content: flex-start; }
.caret { width: 0; border: 3px solid transparent; border-top-color: #000; border-bottom: 0; }
.wide { width: auto; gap: 1px; white-space: nowrap; }
.order { padding: 0 4px 0 6px; }
.auto { padding: 0 6px; gap: 3px; }
.on.tool { background: #f8f8f8; border: 1px solid; border-color: #a0a0a0 #fff #fff #a0a0a0; width: 26px; margin: 0 1px; }
.extras { display: flex; align-items: center; gap: 3px; margin-left: auto; padding-right: 3px; }
.chat { width: 22px; height: 16px; }
.tf { color: #404040; font-family: "DejaVu Sans Condensed", "DejaVu Sans", sans-serif; font-size: 10px; }

.chart { flex: 1; display: flex; flex-direction: column; padding: 2px 0 0 1px; border: solid #696969; border-width: 1px 0 0 1px; margin: 1px 1px 0 1px; background: #c4c4c4; outline: 1px solid #a0a0a0; font-family: "DejaVu Sans Condensed", "DejaVu Sans", sans-serif; font-size: 9px; line-height: 12px; }
.pane { display: flex; padding-left: 1px; }
.price { flex: 1 0 475px; margin-bottom: 1px; }
.hill { flex: none; height: 86px; }
.plot { position: relative; flex: 1; min-width: 0; border: 1px solid #000; }
.canvas { position: absolute; inset: 0; width: 100%; height: 100%; overflow: hidden; }
.plottext { position: relative; padding: 1px 4px; }
.plottext p { display: flex; align-items: center; gap: 4px; margin: 0; height: 13px; }
.plottext .caret { border-width: 4px; border-bottom: 0; margin-left: -1px; }
.band { fill: none; stroke: #fff; stroke-dasharray: 3 3; }
.band.dark { stroke: #000; }
.sell, .buy { fill: none; stroke: #dc143c; stroke-width: 2; }
.buy { stroke: #1e90ff; }
.timer { font-family: "Liberation Sans", Arial, sans-serif; font-size: 13px; fill: #120018; }
.axis { position: relative; display: flex; flex-direction: column; justify-content: space-between; width: 46px; padding: 22px 0 8px; }
.axis span { display: flex; align-items: center; height: 12px; }
.axis span::before { content: ""; width: 2px; height: 1px; margin-right: 3px; background: #000; }
.axis .bid { position: absolute; left: 1px; right: 3px; top: 295px; padding-left: 4px; height: 11px; line-height: 11px; background: #000; color: #fff; }
.axis.ends { padding: 2px 0 1px; }
.axis.ends span::before { visibility: hidden; margin-right: 1px; }
.times { display: flex; height: 20px; padding-left: 1px; }
.times span { width: 64px; flex: none; padding-top: 3px; background: linear-gradient(#000, #000) 0 0 / 1px 3px no-repeat; }

.tabs { display: flex; height: 22px; margin-top: 1px; border-top: 1px solid #000; border-bottom: 1px solid #fff; color: #7a7a7a; }
.tablist { display: flex; padding-left: 6px; height: 19px; }
.tablist button { position: relative; min-width: 84px; padding: 0 14px 0 12px; height: 18px; font-family: "Noto Sans", sans-serif; font-size: 11px; }
.tablist button::after { content: ""; position: absolute; right: 0; top: 4px; height: 13px; border-right: 1px solid #707070; }
.tablist .sel { padding: 0 9px; background: #fff; color: #000; border: 1px solid #000; border-top: 0; height: 19px; }
.tablist .sel::after { display: none; }
.scroller { display: flex; gap: 12px; margin-left: auto; padding-right: 9px; height: 16px; }
.arrow { border: 4px solid transparent; border-left-color: #8c8c8c; border-right: 0; }
.arrow.left { border: 4px solid transparent; border-right-color: #8c8c8c; border-left: 0; }

.status { display: flex; align-items: center; height: 22px; white-space: nowrap; font-family: "Noto Sans", sans-serif; font-size: 11px; }
.help { flex: 1; padding-left: 2px; }
.cell { height: 18px; border-left: 1px solid #a0a0a0; padding-left: 5px; display: flex; align-items: center; }
.profile { width: 116px; }
.c102 { width: 102px; }
.c71 { width: 71px; }
.c68 { width: 68px; }
.c70 { width: 70px; }
.c66 { width: 66px; }
.net { width: 130px; gap: 3px; }
.traffic { width: 24px; height: 13px; }

.taskbar { display: flex; height: 40px; color: #fff; background: linear-gradient(90deg, #071420 0, #0c1a26 22%, #333537 42%, #353535 65%, #2c2e31 74%, #0d1a27 84%, #071522 100%); }
.sys { width: 48px; height: 40px; }
.apps { display: flex; gap: 1px; margin-left: 3px; }
.app { position: relative; width: 48px; height: 40px; flex-direction: column; }
.app.run::after { content: ""; position: absolute; left: 4px; right: 4px; bottom: 0; height: 2px; background: #76b9ed; }
.app.on::after { left: 0; right: 0; }
.app.on { background: #585a5c; color: #1c1c1c; font-size: 10px; line-height: 12px; }
.alp { width: 24px; height: 14px; }
.tray { display: flex; align-items: center; margin-left: auto; font-family: "Noto Sans", sans-serif; font-size: 11px; }
.tray button { width: 24px; height: 40px; }
.tray .lang { width: 34px; }
.tray .when { width: 70px; flex-direction: column; line-height: 18px; }
.tray .notify { width: 36px; }
.peek { width: 1px; height: 40px; margin: 0 4px 0 10px; background: #5a646e; }
</style>
